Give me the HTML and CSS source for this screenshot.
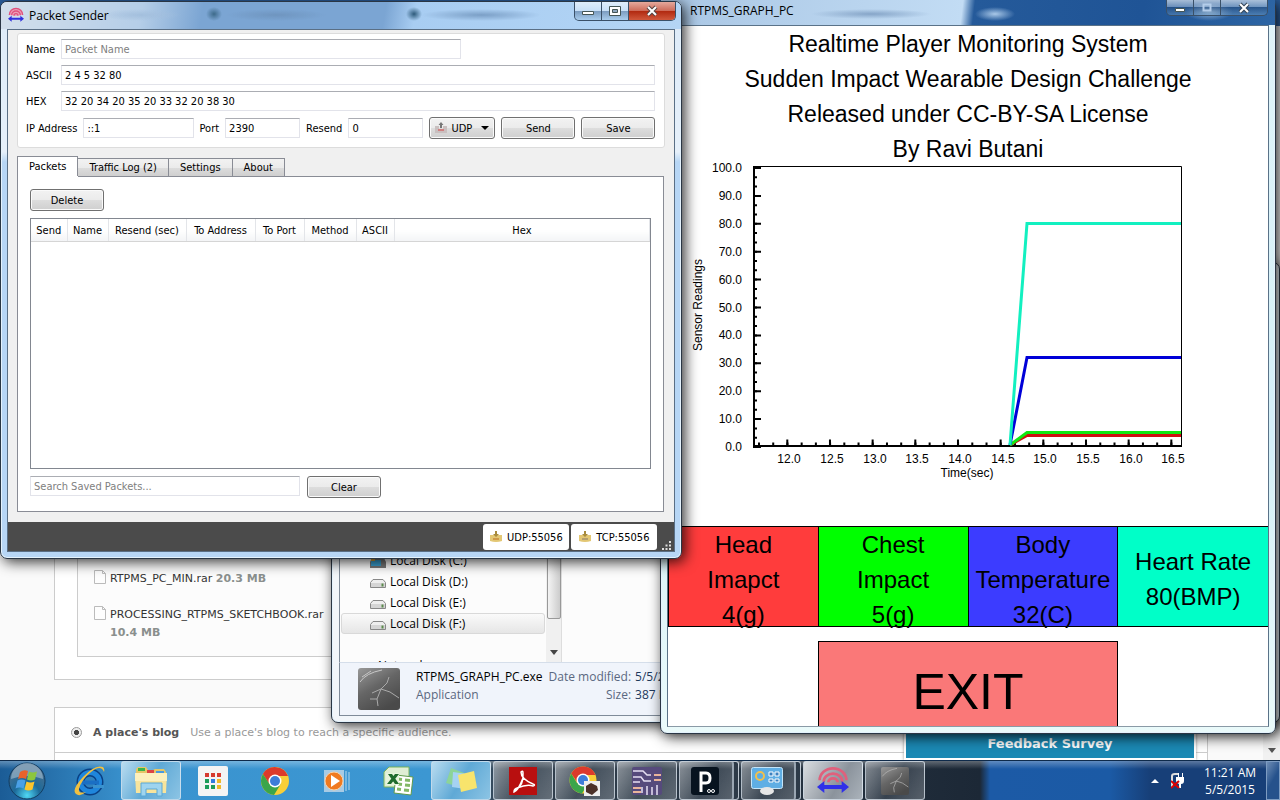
FILE: index.html
```html
<!DOCTYPE html>
<html lang="en">
<head>
    <meta charset="UTF-8">
    <title>Packet Sender</title>
    <link rel="stylesheet" href="styles.css">
</head>
<body>
<div class="desktop">

    <!-- browser page behind the windows -->
    <div class="page">
        <div class="panel files">
            <ul class="file-list">
                <li>
                    <svg width="12" height="14" viewBox="0 0 12 14"><path d="M.5 .5h8l3 3v10H.5zM8.5 .5v3h3" fill="#fdfdfd" stroke="#bbb"/></svg>
                    <div><a href="#">RTPMS_PC_MIN.rar</a> <b>20.3 MB</b></div>
                </li>
                <li>
                    <svg width="12" height="14" viewBox="0 0 12 14"><path d="M.5 .5h8l3 3v10H.5zM8.5 .5v3h3" fill="#fdfdfd" stroke="#bbb"/></svg>
                    <div><a href="#">PROCESSING_RTPMS_SKETCHBOOK.rar</a><br><b>10.4 MB</b></div>
                </li>
            </ul>
        </div>
        <div class="panel places">
            <div class="place">
                <input type="radio" id="blog" name="place" checked>
                <label for="blog">A place's blog</label>
                <span>Use a place's blog to reach a specific audience.</span>
            </div>
        </div>
        <a class="survey" href="#">Feedback Survey</a>
        <div class="page-scroll"><svg width="8" height="5" viewBox="0 0 8 5"><path d="M0 0h8L4 5z" fill="#555"/></svg></div>
    </div>

    <!-- explorer -->
    <div class="window explorer">
        <div class="explorer-main">
            <ul class="tree">
                <li>
                    <svg width="16" height="12" viewBox="0 0 16 12"><path d="M2 1h12l2 4v6H0V5z" fill="#777"/><path d="M1 3h10v6H1z" fill="#3aa0d0"/><path d="M1 1h4v3H1z" fill="#d9a032"/></svg>
                    Local Disk (C:)
                </li>
                <li>
                    <svg width="16" height="9" viewBox="0 0 16 9"><path d="M3 .5h10l2.5 3v5H.5v-5z" fill="#eee" stroke="#888"/><path d="M1 4h14v4H1z" fill="#d5d5d5"/><path d="M11.5 4.5h2v3h-2z" fill="#5b8a4c"/></svg>
                    Local Disk (D:)
                </li>
                <li>
                    <svg width="16" height="9" viewBox="0 0 16 9"><path d="M3 .5h10l2.5 3v5H.5v-5z" fill="#eee" stroke="#888"/><path d="M1 4h14v4H1z" fill="#d5d5d5"/><path d="M11.5 4.5h2v3h-2z" fill="#5b8a4c"/></svg>
                    Local Disk (E:)
                </li>
                <li class="selected">
                    <svg width="16" height="9" viewBox="0 0 16 9"><path d="M3 .5h10l2.5 3v5H.5v-5z" fill="#eee" stroke="#888"/><path d="M1 4h14v4H1z" fill="#d5d5d5"/><path d="M11.5 4.5h2v3h-2z" fill="#5b8a4c"/></svg>
                    Local Disk (F:)
                </li>
                <li class="network">
                    <svg width="14" height="14" viewBox="0 0 14 14"><circle cx="6" cy="7" r="6" fill="#2c9fd6"/><path d="M2 3q4-4 6 0l-3 4q-4 1-3-4z" fill="#58b947"/></svg>
                    Network
                </li>
            </ul>
            <div class="tree-scroll">
                <div class="thumb"></div>
                <svg width="8" height="5" viewBox="0 0 8 5"><path d="M0 0h8L4 5z" fill="#444"/></svg>
            </div>
        </div>
        <div class="details">
            <svg class="thumbnail" width="42" height="42" viewBox="0 0 42 42">
                <defs><linearGradient id="rock" x1="0" y1="0" x2="0.6" y2="1"><stop offset="0" stop-color="#999"/><stop offset=".5" stop-color="#666"/><stop offset="1" stop-color="#4a4a4a"/></linearGradient></defs>
                <rect width="42" height="42" rx="3" fill="url(#rock)"/>
                <path d="M2 14Q8 5 24 2M4 9l9-6" stroke="#c8c8c8" fill="none"/>
                <path d="M14 25l9-4 6-6 2-6M23 21l9 3 9 6M23 21l-4 10 1 7M12 31l7 0" stroke="#aaa" fill="none"/>
            </svg>
            <dl class="file-name"><dt>RTPMS_GRAPH_PC.exe</dt><dd>Application</dd></dl>
            <dl class="file-info">
                <dt>Date modified:</dt><dd>5/5/2015</dd>
                <dt>Size:</dt><dd>387 KB</dd>
            </dl>
        </div>
    </div>

    <!-- graph -->
    <div class="window graph">
        <div class="titlebar">
            <span class="title">RTPMS_GRAPH_PC</span>
            <div class="controls">
                <button aria-label="Minimize"><svg width="12" height="12" viewBox="0 0 12 12"><path d="M1.5 6.5h9v3h-9z" fill="#fff" stroke="#455"/></svg></button>
                <button aria-label="Maximize"><svg width="12" height="12" viewBox="0 0 12 12"><path d="M2.5 2.5h7v6h-7z" fill="none" stroke="#b4cdea" stroke-width="2"/></svg></button>
                <button class="wide" aria-label="Close"><svg width="12" height="12" viewBox="0 0 12 12"><path d="M2 2l8 8M10 2l-8 8" stroke="#345" stroke-width="4"/><path d="M2 2l8 8M10 2l-8 8" stroke="#fff" stroke-width="2"/></svg></button>
            </div>
        </div>
        <div class="sketch">
            <div class="heading">
                <p>Realtime Player Monitoring System</p>
                <p>Sudden Impact Wearable Design Challenge</p>
                <p>Released under CC-BY-SA License</p>
                <p>By Ravi Butani</p>
            </div>
            <svg class="chart" viewBox="0 0 600 361">
                <path d="M85 1.5h428.5v280" fill="none" stroke="#000"/>
                <!-- axes, ticks drawn as dashes -->
                <path d="M86 1v280h428" fill="none" stroke="#000" stroke-width="2"/>
                <path d="M89 2v281" stroke="#000" stroke-width="8" stroke-dasharray="2 25.9"/>
                <path d="M87 2v281" stroke="#000" stroke-width="4" stroke-dasharray="2 7.3"/>
                <path d="M118.3 278h395" stroke="#000" stroke-width="7" stroke-dasharray="2 40.67"/>
                <path d="M90 279.5h424" stroke="#000" stroke-width="4" stroke-dasharray="2 12.22"/>
                <g fill="none" stroke-width="3">
                    <path d="M342 280l17-9.500h154" stroke="#d01010"/>
                    <path d="M342 280l17-12.500h154" stroke="#10e810"/>
                    <path d="M342 280l17-87.500h154" stroke="#0000d8"/>
                    <path d="M342 280l17-221.500h154" stroke="#12f0c0"/>
                </g>
                <g class="ticks" text-anchor="end">
                    <text x="74" y="7">100.0</text>
                    <text x="74" y="35">90.0</text>
                    <text x="74" y="63">80.0</text>
                    <text x="74" y="91">70.0</text>
                    <text x="74" y="119">60.0</text>
                    <text x="74" y="147">50.0</text>
                    <text x="74" y="174">40.0</text>
                    <text x="74" y="202">30.0</text>
                    <text x="74" y="230">20.0</text>
                    <text x="74" y="258">10.0</text>
                    <text x="74" y="286">0.0</text>
                </g>
                <g class="ticks" text-anchor="middle">
                    <text x="121" y="298">12.0</text>
                    <text x="164" y="298">12.5</text>
                    <text x="207" y="298">13.0</text>
                    <text x="249" y="298">13.5</text>
                    <text x="292" y="298">14.0</text>
                    <text x="335" y="298">14.5</text>
                    <text x="377" y="298">15.0</text>
                    <text x="420" y="298">15.5</text>
                    <text x="463" y="298">16.0</text>
                    <text x="505" y="298">16.5</text>
                    <text x="299" y="312">Time(sec)</text>
                    <text transform="translate(34 140) rotate(-90)">Sensor Readings</text>
                </g>
            </svg>
            <div class="readings">
                <div class="reading head">Head<br>Imapct<br>4(g)</div>
                <div class="reading chest">Chest<br>Impact<br>5(g)</div>
                <div class="reading body-temp">Body<br>Temperature<br>32(C)</div>
                <div class="reading heart">Heart Rate<br>80(BMP)</div>
            </div>
            <button class="exit">EXIT</button>
        </div>
    </div>

    <!-- packet sender -->
    <div class="window sender">
        <div class="titlebar">
            <svg width="16" height="16" viewBox="0 0 48 48"><path d="M4 24a20 20 0 0 1 40 0M11 25a13 13 0 0 1 26 0M18 26a6 6 0 0 1 12 0" fill="#e9a0b8" stroke="#e0507c" stroke-width="4"/><path d="M0 35l11-9v6h26v-6l11 9-11 9v-6H11v6z" fill="#3030dd"/></svg>
            <span class="title">Packet Sender</span>
            <div class="controls">
                <button aria-label="Minimize"><svg width="12" height="12" viewBox="0 0 12 12"><path d="M.5 6.5h11v3H.5z" fill="#fff" stroke="#455"/></svg></button>
                <button aria-label="Maximize"><svg width="12" height="12" viewBox="0 0 12 12"><path d="M.5 1.5h11v9H.5z" fill="#fff" stroke="#455"/><path d="M3.5 4.5h5v3h-5z" fill="#8fa6bd" stroke="#455"/></svg></button>
                <button class="wide close" aria-label="Close"><svg width="12" height="12" viewBox="0 0 12 12"><path d="M2 2l8 8M10 2l-8 8" stroke="#544" stroke-width="4"/><path d="M2 2l8 8M10 2l-8 8" stroke="#fff" stroke-width="2"/></svg></button>
            </div>
        </div>
        <div class="client">
            <form class="packet">
                <div class="row short">
                    <label for="name">Name</label>
                    <input type="text" id="name" placeholder="Packet Name">
                </div>
                <div class="row">
                    <label for="ascii">ASCII</label>
                    <input type="text" id="ascii" value="2 4 5 32 80">
                </div>
                <div class="row">
                    <label for="hex">HEX</label>
                    <input type="text" id="hex" value="32 20 34 20 35 20 33 32 20 38 30">
                </div>
                <div class="target">
                    <label for="ip">IP Address</label>
                    <input type="text" id="ip" class="ip" value="::1">
                    <label for="port">Port</label>
                    <input type="text" id="port" value="2390">
                    <label for="resend">Resend</label>
                    <input type="text" id="resend" value="0">
                    <div class="method">
                        <svg width="12" height="12" viewBox="0 0 12 12"><path d="M0 4h4v3h4V4h4v7H0z" fill="#c9c0c0"/><path d="M6 0l2.5 3H7v3H5V3H3.5z" fill="#777"/><path d="M3 8h6" stroke="#d08080" stroke-width="2"/></svg>
                        <select aria-label="Method"><option>UDP</option><option>TCP</option></select>
                        <svg width="8" height="4" viewBox="0 0 8 4"><path d="M0 0h8L4 4z"/></svg>
                    </div>
                    <button type="button" class="btn">Send</button>
                    <button type="button" class="btn">Save</button>
                </div>
            </form>
            <div class="tabs">
                <button class="tab active">Packets</button>
                <button class="tab">Traffic Log (2)</button>
                <button class="tab">Settings</button>
                <button class="tab">About</button>
            </div>
            <div class="pane">
                <button class="btn">Delete</button>
                <div class="saved">
                    <table>
                        <colgroup>
                            <col class="w36"><col class="w41"><col class="w78"><col class="w69"><col class="w49"><col class="w52"><col class="w38"><col>
                        </colgroup>
                        <tr>
                            <th>Send</th>
                            <th>Name</th>
                            <th>Resend (sec)</th>
                            <th>To Address</th>
                            <th>To Port</th>
                            <th>Method</th>
                            <th>ASCII</th>
                            <th>Hex</th>
                        </tr>
                    </table>
                </div>
                <div class="search">
                    <input type="text" aria-label="Search" placeholder="Search Saved Packets...">
                    <button class="btn">Clear</button>
                </div>
            </div>
            <div class="statusbar">
                <button><svg width="12" height="12" viewBox="0 0 12 12"><path d="M0 4h12v6q-6 2-12 0z" fill="#e3c774"/><path d="M5 0h2v3h2L6 6 3 3h2z" fill="#a88b3d"/><path d="M3 8h6" stroke="#cf9a4a" stroke-width="2"/></svg>UDP:55056</button>
                <button><svg width="12" height="12" viewBox="0 0 12 12"><path d="M0 4h12v6q-6 2-12 0z" fill="#e3c774"/><path d="M5 0h2v3h2L6 6 3 3h2z" fill="#a88b3d"/><path d="M3 8h6" stroke="#b5a070" stroke-width="2"/></svg>TCP:55056</button>
                <svg class="grip" width="9" height="9" viewBox="0 0 9 9"><path d="M7 0h2v2H7zM3.5 3.5h2v2h-2zM7 3.5h2v2H7zM0 7h2v2H0zM3.5 7h2v2h-2zM7 7h2v2H7z" fill="#ddd"/></svg>
            </div>
        </div>
    </div>

    <!-- taskbar -->
    <div class="taskbar">
        <button class="start" aria-label="Start">
            <svg width="38" height="38" viewBox="0 0 38 38">
                <defs><radialGradient id="orb" cx=".5" cy=".9" r=".8"><stop offset="0" stop-color="#4fd8f5"/><stop offset=".45" stop-color="#1c6a9a"/><stop offset="1" stop-color="#4d6f8e"/></radialGradient></defs>
                <circle cx="19" cy="19" r="18" fill="url(#orb)" stroke="#123c60"/>
                <path d="M3 17a16 16 0 0 1 32 0q-16-6-32 0z" fill="#b9cfdd" opacity=".5"/>
                <path d="M12 10q4-3 8-1l-2 8q-4-2-8 0z" fill="#e8622a"/>
                <path d="M21 9.500q4 2 8 0l-2 8q-4 2-8 0z" fill="#8cc63e"/>
                <path d="M9.500 18.500q4-2 8 0l-2 8q-4-2-8 0z" fill="#4aa0e6"/>
                <path d="M18.500 19.500q4 2 8 0l-2 8q-4 2-8 0z" fill="#fcc52c"/>
            </svg>
        </button>
        <button class="task" aria-label="Internet Explorer">
            <svg width="32" height="32" viewBox="0 0 32 32"><circle cx="17" cy="17" r="9.500" fill="none" stroke="#0a4084" stroke-width="8"/><circle cx="17" cy="17" r="9.500" fill="none" stroke="#1f86dc" stroke-width="5"/><path d="M9 17.500h17" stroke="#1a6fc4" stroke-width="4"/><path d="M20 20h11v3H20z" fill="#3a92ce"/><path d="M30 2Q22-1 10 12T3 29q4 3 10-2-8 2-7-3 2-9 12-17T31 7q1-3-1-5z" fill="#f0c040"/></svg>
        </button>
        <button class="task open light" aria-label="Windows Explorer">
            <svg width="32" height="32" viewBox="0 0 32 32"><path d="M1 4l2-2h8l2 3h5l2-1h9l2 3v20H1z" fill="#e6c767"/><path d="M3 3h7v3H3z" fill="#3cb44a"/><path d="M12 5h7v3h-7z" fill="#d44"/><path d="M21 6h8v3h-8z" fill="#4a9ae0"/><path d="M0 8h32l-1 20H1z" fill="#f8e49c"/><path d="M0 8h32v8H0z" fill="#fcf0bd"/><path d="M6 31V18h21v13h-5v-7H11v7z" fill="#9ed4ef" stroke="#5ba8d4"/></svg>
        </button>
        <button class="task" aria-label="Apps">
            <svg width="30" height="30" viewBox="0 0 30 30"><rect width="30" height="30" rx="2" fill="#f4f4f4"/><path d="M7 7h4v4H7zM13 7h4v4h-4zM19 7h4v4h-4z" fill="#d63a2f"/><path d="M7 13h4v4H7zM7 19h4v4H7zM13 19h4v4h-4z" fill="#1e9c5a"/><path d="M13 13h4v4h-4z" fill="#2f7be0"/><path d="M19 13h4v4h-4zM19 19h4v4h-4z" fill="#eeb92c"/></svg>
        </button>
        <button class="task" aria-label="Chrome">
            <svg width="30" height="30" viewBox="0 0 30 30"><circle cx="15" cy="15" r="14" fill="#f8cf38"/><path d="M2.900 8A14 14 0 0 1 28 10H15L9 17.500z" fill="#dc3a2c"/><path d="M2.900 8A14 14 0 0 0 14 29l6.500-10.500L9.500 18z" fill="#3ba54a"/><circle cx="15" cy="15" r="6.500" fill="#fff"/><circle cx="15" cy="15" r="5" fill="#3d7dd8"/></svg>
        </button>
        <button class="task" aria-label="Media Player">
            <svg width="26" height="24" viewBox="0 0 26 24"><path d="M0 1h20v22H0z" fill="#a8cbe4"/><path d="M22 2v20M25 3v18" stroke="#b5d8ee"/><circle cx="10" cy="12" r="9" fill="#f07a20" stroke="#f9d2a8"/><path d="M7 6l9 6-9 6z" fill="#fff"/></svg>
        </button>
        <button class="task" aria-label="Excel">
            <svg width="32" height="30" viewBox="0 0 32 30"><path d="M6 1h20v20H1V6z" fill="#dfeed4" stroke="#79b25a"/><path d="M13 9l17 2-2 18-17-2z" fill="#fff" stroke="#5f9a4c"/><path d="M15 13l4 .5M22 14l5 .5M15 18l4 .5M22 19l5 .5M14 23l4 .5M21 24l5 .5" stroke="#83b866" stroke-width="3"/><path d="M3 7h13v12H3z" fill="#e7f4dc"/><path d="M5 8h4l7 10h-4zM12 8h4L8 18H4z" fill="#1f6b2d"/></svg>
        </button>
        <button class="task open light" aria-label="Sticky Notes">
            <svg width="32" height="28" viewBox="0 0 32 28"><path d="M6 1l13 5-4 14L1 16z" fill="#8cd498"/><path d="M8 5l14 2-2 15-13-2z" fill="#a6d2f2"/><path d="M13 8l16-4 3 17-16 4z" fill="#f8e46c"/></svg>
        </button>
        <button class="task open" aria-label="Adobe Reader">
            <svg width="28" height="28" viewBox="0 0 28 28"><path d="M0 0h28v28H0z" fill="#b80f0f"/><path d="M6 23q9-4 8-17 0-3-2-1 0 7 12 12 3 1 0 2-6-2-16 2-3 1-3 4 4-1 9-14" fill="none" stroke="#fff" stroke-width="1.500"/></svg>
        </button>
        <button class="task open" aria-label="Chrome window">
            <svg width="32" height="30" viewBox="0 0 32 30"><circle cx="14" cy="14" r="13.500" fill="#f8cf38"/><path d="M2.200 7.500A13.500 13.500 0 0 1 26.500 9H14l-6 7z" fill="#dc3a2c"/><path d="M2.200 7.500A13.500 13.500 0 0 0 13 27.500l6-10L8 17z" fill="#3ba54a"/><circle cx="14" cy="14" r="6.500" fill="#fff"/><circle cx="14" cy="14" r="5" fill="#3d7dd8"/><path d="M15 15h16v15H15z" fill="#eee"/><path d="M17 20l5-3 6 3 1 4-6 5-6-3z" fill="#4a3028"/></svg>
        </button>
        <button class="task open" aria-label="Fritzing">
            <svg width="30" height="28" viewBox="0 0 30 28"><rect width="30" height="28" rx="2" fill="#564a7c"/><path d="M1 4h10l4 4h4M1 10h8l3 4h7M1 15h7M15 28v-9M20 28v-8M25 28V18M10 20v6" fill="none" stroke="#e6dff2" stroke-width="1.500"/><path d="M22 8h7M22 13h7M1 21h8M1 25h8" stroke="#e9b49a" stroke-width="2"/></svg>
        </button>
        <button class="task open stack" aria-label="Processing">
            <svg width="28" height="28" viewBox="0 0 28 28"><rect width="28" height="28" rx="3" fill="#07131f"/><path d="M10 25V6h5q4 0 4 5t-4 5h-5" fill="none" stroke="#fff" stroke-width="3"/><circle cx="18" cy="24" r="1.500" fill="none" stroke="#fff"/><circle cx="22" cy="24" r="1.500" fill="none" stroke="#fff"/></svg>
        </button>
        <button class="task open stack" aria-label="Control Panel">
            <svg width="32" height="28" viewBox="0 0 32 28"><rect x=".5" y=".5" width="31" height="21" rx="2" fill="#5faee4" stroke="#c4e4f8"/><circle cx="9" cy="9" r="4" fill="none" stroke="#f2c04c" stroke-width="2"/><path d="M18 5h4v4h-4zM24 5h4v4h-4zM18 12h4v3h-4zM24 12h4v3h-4z" fill="#3a80c0" stroke="#fff"/><ellipse cx="16" cy="24" rx="7" ry="4" fill="#e6e6e6"/></svg>
        </button>
        <button class="task open active" aria-label="Packet Sender">
            <svg width="32" height="28" viewBox="0 0 48 42"><path d="M4 20a20 18 0 0 1 40 0M10 22a14 12 0 0 1 28 0M17 23a7 6 0 0 1 14 0" fill="none" stroke="#e0607c" stroke-width="4"/><path d="M0 30l11-9v6h26v-6l11 9-11 9v-6H11v6z" fill="#3030e8"/></svg>
        </button>
        <button class="task open" aria-label="RTPMS_GRAPH_PC">
            <svg width="28" height="28" viewBox="0 0 42 42"><rect width="42" height="42" rx="3" fill="url(#rock)"/><path d="M2 14Q8 5 24 2M14 25l9-4 6-6 2-6M23 21l9 3 9 6M23 21l-4 10 1 7" stroke="#bbb" fill="none"/></svg>
        </button>
        <div class="tray">
            <svg width="8" height="4" viewBox="0 0 8 4"><path d="M0 4h8L4 0z" fill="#fff"/></svg>
            <svg width="14" height="16" viewBox="0 0 14 16"><path d="M1 14V3q0-2 3-2h3" fill="none" stroke="#ddd" stroke-width="2"/><path d="M5 4h8v4q0 3-3 3v4H8v-4Q5 10 5 8zM7 0h1v4H7zM11 0h1v4h-1z" fill="#fff"/><path d="M0 8l8 7M8 8l-8 7" stroke="#e00000" stroke-width="2"/></svg>
            <div class="clock">11:21 AM<br>5/5/2015</div>
            <button class="show-desktop" aria-label="Show desktop"></button>
        </div>
    </div>
</div>
</body>
</html>
```
FILE: styles.css
```css
* {
    box-sizing: border-box;
}
body {
    margin: 0;
    font-family: "DejaVu Sans Condensed", "DejaVu Sans", sans-serif;
    font-size: 11px;
    color: #000;
}
button, input, select {
    font: inherit;
    color: inherit;
    margin: 0;
    padding: 0;
}
svg {
    flex: none;
    display: block;
}
ul, dl, dd, p {
    margin: 0;
    padding: 0;
    list-style: none;
}
.desktop {
    position: relative;
    height: 100vh;
    overflow: hidden;
    background: #14233a;
}

/* browser page */
.page {
    height: calc(100vh - 40px);
    display: flex;
    flex-direction: column;
    justify-content: flex-end;
    position: relative;
    background: linear-gradient(#2b5f9e 26px, #e4e4e6 26px, #e4e4e6 60px, #fafafa 60px);
    font-family: "DejaVu Sans", sans-serif;
}
.panel {
    margin: 0 72px 0 54px;
    border: 1px solid #ccc;
    background: #fff;
}
.files {
    padding: 0 22px 22px;
    margin-bottom: 27px;
    border-top: none;
}
.file-list {
    display: flex;
    flex-direction: column;
    gap: 18px;
    padding: 40px 16px 14px;
    line-height: 18px;
    border: 1px solid #ccc;
    background: #fcfcfc;
}
.file-list li {
    display: flex;
    gap: 4px;
}
.file-list a {
    color: #333;
    text-decoration: none;
}
.file-list b {
    color: #8a8f8d;
}
.places {
    height: 53px;
    border-bottom: none;
}
.place {
    display: flex;
    align-items: center;
    gap: 11px;
    height: 45px;
    padding: 4px 16px 0;
    border-bottom: 1px solid #ccc;
    color: #999;
}
.place label {
    font-weight: bold;
    color: #555;
}
.place input {
    appearance: none;
    width: 11px;
    height: 11px;
    border: 1px solid #999;
    border-radius: 50%;
    background: radial-gradient(#444 35%, #eee 45%);
}
.survey {
    position: absolute;
    right: 84px;
    bottom: 0;
    width: 292px;
    padding: 4px 0 5px;
    border: 2px solid #fff;
    background: #1b89b4;
    box-shadow: 0 0 3px #999;
    color: #fff;
    font-size: 13px;
    font-weight: bold;
    line-height: 18px;
    text-align: center;
    text-decoration: none;
}
.page-scroll {
    position: absolute;
    right: 0;
    top: 60px;
    bottom: 0;
    width: 17px;
    display: flex;
    align-items: flex-end;
    justify-content: center;
    padding-bottom: 7px;
    background: #f1f1f1;
}

/* window frames */
.window {
    position: absolute;
    display: flex;
    flex-direction: column;
    padding: 0 7px 6px;
    border: 1px solid #2a3644;
    border-radius: 7px;
    background: #b9d3ee;
    box-shadow: inset 0 0 0 1px #e4f2fc, 3px 3px 14px rgba(0, 0, 0, .8);
}
.titlebar {
    display: flex;
    align-items: center;
    gap: 5px;
    position: relative;
    font-family: "Open Sans", "Noto Sans", sans-serif;
    font-size: 12px;
}
.controls {
    display: flex;
    position: absolute;
    right: 0;
    top: 0;
    border: 1px solid #3a5068;
    border-top: none;
    border-radius: 0 0 5px 5px;
    overflow: hidden;
}
.controls button {
    display: flex;
    align-items: center;
    justify-content: center;
    width: 27px;
    height: 18px;
    border: none;
    border-right: 1px solid #3a5068;
    background: linear-gradient(rgba(255, 255, 255, .6), rgba(255, 255, 255, .3) 50%, rgba(40, 70, 110, .4) 50%, rgba(150, 190, 220, .3));
}
.controls .wide {
    width: 46px;
    border-right: none;
}
.controls .close {
    background: linear-gradient(#e5a99c, #cd6a58 50%, #b0280f 50%, #d0583c);
}

/* explorer */
.explorer {
    left: 331px;
    right: 0;
    top: 262px;
    bottom: 77px;
    background: #f2f6fa;
    font-family: "Open Sans", "Noto Sans", sans-serif;
    font-size: 12px;
}
.explorer-main {
    flex: 1;
    min-height: 0;
    display: flex;
    align-items: flex-end;
    background: #fcfcfc;
    border-left: 1px solid #7f8b99;
    overflow: hidden;
}
.tree {
    width: 206px;
    height: 112px;
    padding: 0 1px;
}
.tree li {
    display: flex;
    align-items: center;
    gap: 4px;
    height: 21px;
    padding-left: 28px;
    border: 1px solid transparent;
    border-radius: 3px;
}
.tree svg {
    margin-top: 4px;
}
.tree .selected {
    background: linear-gradient(#fafafa, #e6e6e6);
    border-color: #d9d9d9;
}
.tree .network {
    margin-top: 21px;
    padding-left: 18px;
}
.tree-scroll {
    align-self: stretch;
    width: 16px;
    display: flex;
    flex-direction: column;
    align-items: center;
    justify-content: space-between;
    padding-bottom: 7px;
    background: #f0f0f0;
    border-right: 1px solid #ddd;
}
.thumb {
    width: 14px;
    height: calc(100% - 36px);
    border: 1px solid #999;
    border-radius: 2px;
    background: linear-gradient(90deg, #f4f4f4, #ccc);
}
.details {
    display: flex;
    align-items: flex-start;
    height: 54px;
    padding: 5px 0 0 18px;
    border: 1px solid #7f8b99;
    border-top-color: #d5deea;
    background: #f0f4fb;
    line-height: 18px;
    white-space: nowrap;
}
.file-name {
    margin-left: 16px;
}
.file-name dd, .file-info dt {
    color: #5a6880;
}
.file-info {
    display: grid;
    grid-template-columns: auto auto;
    column-gap: 4px;
    margin-left: 6px;
    color: #1e395b;
}
.file-info dt {
    text-align: right;
}

/* graph */
.graph {
    left: 660px;
    right: 4px;
    top: -1px;
    bottom: 66px;
    background: linear-gradient(#e0f4f9, #d4f0f8 60%, #eafafa);
}
.graph .titlebar {
    height: 25px;
    margin: 0 -7px;
    padding: 0 0 5px 29px;
    background:
        radial-gradient(ellipse 24px 9px at 548px 12px, #8fb0d2, transparent),
        radial-gradient(ellipse 20px 7px at 334px 14px, #a9c8e8, transparent),
        radial-gradient(ellipse 60px 5px at 210px 14px, #86a5c8, transparent),
        linear-gradient(97deg, #a9c6e4, #c2dcf4 300px, #255a9a 312px, #1f5496 480px, #2d65a4);
}
.graph .controls {
    right: 7px;
}
.graph .controls button {
    height: 15px;
}
.sketch {
    flex: 1;
    min-height: 0;
    display: flex;
    flex-direction: column;
    padding-top: 1px;
    border: 1px solid #5a7288;
    border-bottom-color: #8a9aa6;
    margin: 0 -1px;
    background: #fff;
    font-family: "Liberation Sans", Arial, sans-serif;
    overflow: hidden;
}
.heading {
    font-size: 23px;
    line-height: 35px;
    text-align: center;
}
.chart {
    width: 100%;
    margin-top: -2px;
    overflow: visible;
}
.ticks {
    font-size: 12px;
}
.readings {
    display: grid;
    grid-template-columns: repeat(4, 1fr);
    height: 101px;
    border: 1px solid #000;
    border-right: none;
    font-size: 24px;
    line-height: 35px;
    text-align: center;
}
.reading {
    display: flex;
    align-items: center;
    justify-content: center;
    min-height: 0;
    padding-top: 5px;
    border-right: 1px solid #000;
}
.head {
    background: #ff3c3c;
}
.chest {
    background: #0f0;
}
.body-temp {
    background: #3c3cff;
}
.heart {
    background: #00ffc8;
    border-right: none;
}
.exit {
    flex: none;
    align-self: center;
    width: 50%;
    height: 101px;
    margin-top: 14px;
    border: 1px solid #000;
    background: #fa7878;
    font-size: 50px;
}

/* packet sender */
.sender {
    left: 0;
    top: 1px;
    bottom: 241px;
    width: calc(53% + 4px);
    background: linear-gradient(#dceaf8, #e6f0fa 150px, #b7d6f5 160px);
}
.sender .titlebar {
    height: 27px;
    margin: 0 -7px;
    padding: 0 0 1px 7px;
    border-radius: 6px 6px 0 0;
    background:
        radial-gradient(ellipse 8px 7px at 213px 12px, #3d6a8a, transparent),
        radial-gradient(ellipse 8px 7px at 413px 12px, #2d5a7a, transparent),
        radial-gradient(ellipse 50px 6px at 275px 13px, #6f95bf, transparent),
        radial-gradient(ellipse 60px 6px at 480px 13px, #7b9fc6, transparent),
        radial-gradient(ellipse 40px 6px at 140px 13px, #a3bfdd, transparent),
        linear-gradient(100deg, #d3dfeb, #b5cee8 140px, #7ba5d3 200px, #7ba5d3 380px, #a8cdf2 410px, #b4d5f5);
}
.sender .controls {
    right: 5px;
}
.client {
    flex: 1;
    min-height: 0;
    display: flex;
    flex-direction: column;
    border: 1px solid #5a6f85;
    margin: 0 -1px;
    background: #f0f0f0;
}
.packet {
    display: flex;
    flex-direction: column;
    gap: 6px;
    margin: 3px 9px 0;
    padding: 5px 9px 8px 8px;
    border: 1px solid #dcdcdc;
    border-radius: 3px;
    background: #fff;
}
input[type="text"] {
    min-width: 0;
    height: 20px;
    padding: 0 3px;
    border: 1px solid #e2e3ea;
    border-top-color: #abadb3;
    background: #fff;
}
input::placeholder {
    color: #808080;
}
.row {
    display: flex;
    align-items: center;
}
.row label {
    width: 35px;
}
.row input {
    flex: 1;
}
.short {
    width: 435px;
}
.target {
    display: flex;
    align-items: center;
    gap: 6px;
}
.target input {
    width: 75px;
}
.target .ip {
    flex: 1;
}
.btn, .method {
    width: 74px;
    height: 22px;
    border: 1px solid #707070;
    border-radius: 3px;
    background: linear-gradient(#f2f2f2, #ebebeb 50%, #ddd 50%, #cfcfcf);
    box-shadow: inset 0 0 0 1px #fafafa;
}
.method {
    display: flex;
    align-items: center;
    gap: 4px;
    width: 66px;
    padding: 0 5px;
}
.method select {
    flex: 1;
    min-width: 0;
    appearance: none;
    border: none;
    background: none;
}
.tabs {
    display: flex;
    align-items: flex-end;
    height: 21px;
    margin: 8px 9px 0;
}
.tab {
    height: 19px;
    padding: 0 11px;
    border: 1px solid #898c95;
    border-left: none;
    background: linear-gradient(#f2f2f2, #ebebeb 50%, #ddd 50%, #cfcfcf);
}
.tab.active {
    height: 21px;
    padding-bottom: 1px;
    border-left: 1px solid #898c95;
    border-bottom: none;
    background: #fff;
}
.pane {
    flex: 1;
    min-height: 0;
    display: flex;
    flex-direction: column;
    align-items: flex-start;
    gap: 7px;
    margin: -1px 10px 10px 9px;
    padding: 13px 12px;
    border: 1px solid #898c95;
    border-top: none;
    background: linear-gradient(#898c95, #898c95) 60px 0 / 100% 1px no-repeat #fff;
}
.saved {
    flex: 1;
    align-self: stretch;
    border: 1px solid #828790;
}
.saved table {
    width: 100%;
    table-layout: fixed;
    border-collapse: collapse;
}
.saved th {
    height: 22px;
    padding: 2px 0 0;
    border-right: 1px solid #e3e5e9;
    border-bottom: 1px solid #d5d5d5;
    background: linear-gradient(#fff 50%, #f3f4f6);
    font-weight: normal;
    white-space: nowrap;
}
.w36 { width: 36px; }
.w41 { width: 41px; }
.w78 { width: 78px; }
.w69 { width: 69px; }
.w49 { width: 49px; }
.w52 { width: 52px; }
.w38 { width: 38px; }
.search {
    display: flex;
    gap: 7px;
}
.search input {
    width: 270px;
}
.statusbar {
    display: flex;
    justify-content: flex-end;
    gap: 2px;
    padding: 2px 3px 1px 0;
    background: #4b4b4b;
}
.statusbar button {
    display: flex;
    align-items: center;
    justify-content: center;
    gap: 5px;
    width: 86px;
    height: 26px;
    border: none;
    border-radius: 3px;
    background: #fff;
}
.grip {
    align-self: flex-end;
    margin-left: 3px;
}

/* taskbar */
.taskbar {
    position: relative;
    height: 40px;
    display: flex;
    gap: 2px;
    border-top: 1px solid #0e2a4a;
    background:
        linear-gradient(rgba(255, 255, 255, .3), transparent 8px),
        linear-gradient(90deg, #1b5c96, #3a93cf 130px, #3c97d2 430px, #33414f 500px, #1c2836 980px, #1c5aa6 990px, #1b5aa5 1110px, #173f78 1150px, #173f78);
}
.taskbar button {
    display: flex;
    align-items: center;
    justify-content: center;
    border: none;
    background: none;
}
.taskbar .start {
    width: 57px;
    padding-right: 3px;
}
.task {
    width: 60px;
}
.taskbar .open {
    border: 1px solid rgba(220, 230, 240, .7);
    border-radius: 3px;
    background: linear-gradient(120deg, rgba(255, 255, 255, .45), rgba(255, 255, 255, .1) 50%, rgba(255, 255, 255, .25));
}
.taskbar .light {
    background: linear-gradient(120deg, #b9dcf0, #5fa9d6 50%, #8cc4e4);
}
.taskbar .active {
    background: linear-gradient(120deg, #d8dce0, #8b939c 60%, #aab2ba);
}
.taskbar .stack {
    padding-right: 8px;
    box-shadow: inset -5px 0 0 -1px #2d3a48, inset -7px 0 0 -1px #9aa6b2;
}
.tray {
    flex: 1;
    display: flex;
    align-items: center;
    justify-content: flex-end;
    gap: 12px;
}
.clock {
    width: 66px;
    padding-top: 1px;
    color: #fff;
    font-family: "Open Sans", "Noto Sans", sans-serif;
    font-size: 12px;
    line-height: 17px;
    text-align: center;
}
.show-desktop {
    width: 14px;
    height: 39px;
    margin-left: -9px;
}
.taskbar .show-desktop {
    border: 1px solid #7d9cc2;
    background: linear-gradient(120deg, #6e8db5, #26528c 50%);
}
```
